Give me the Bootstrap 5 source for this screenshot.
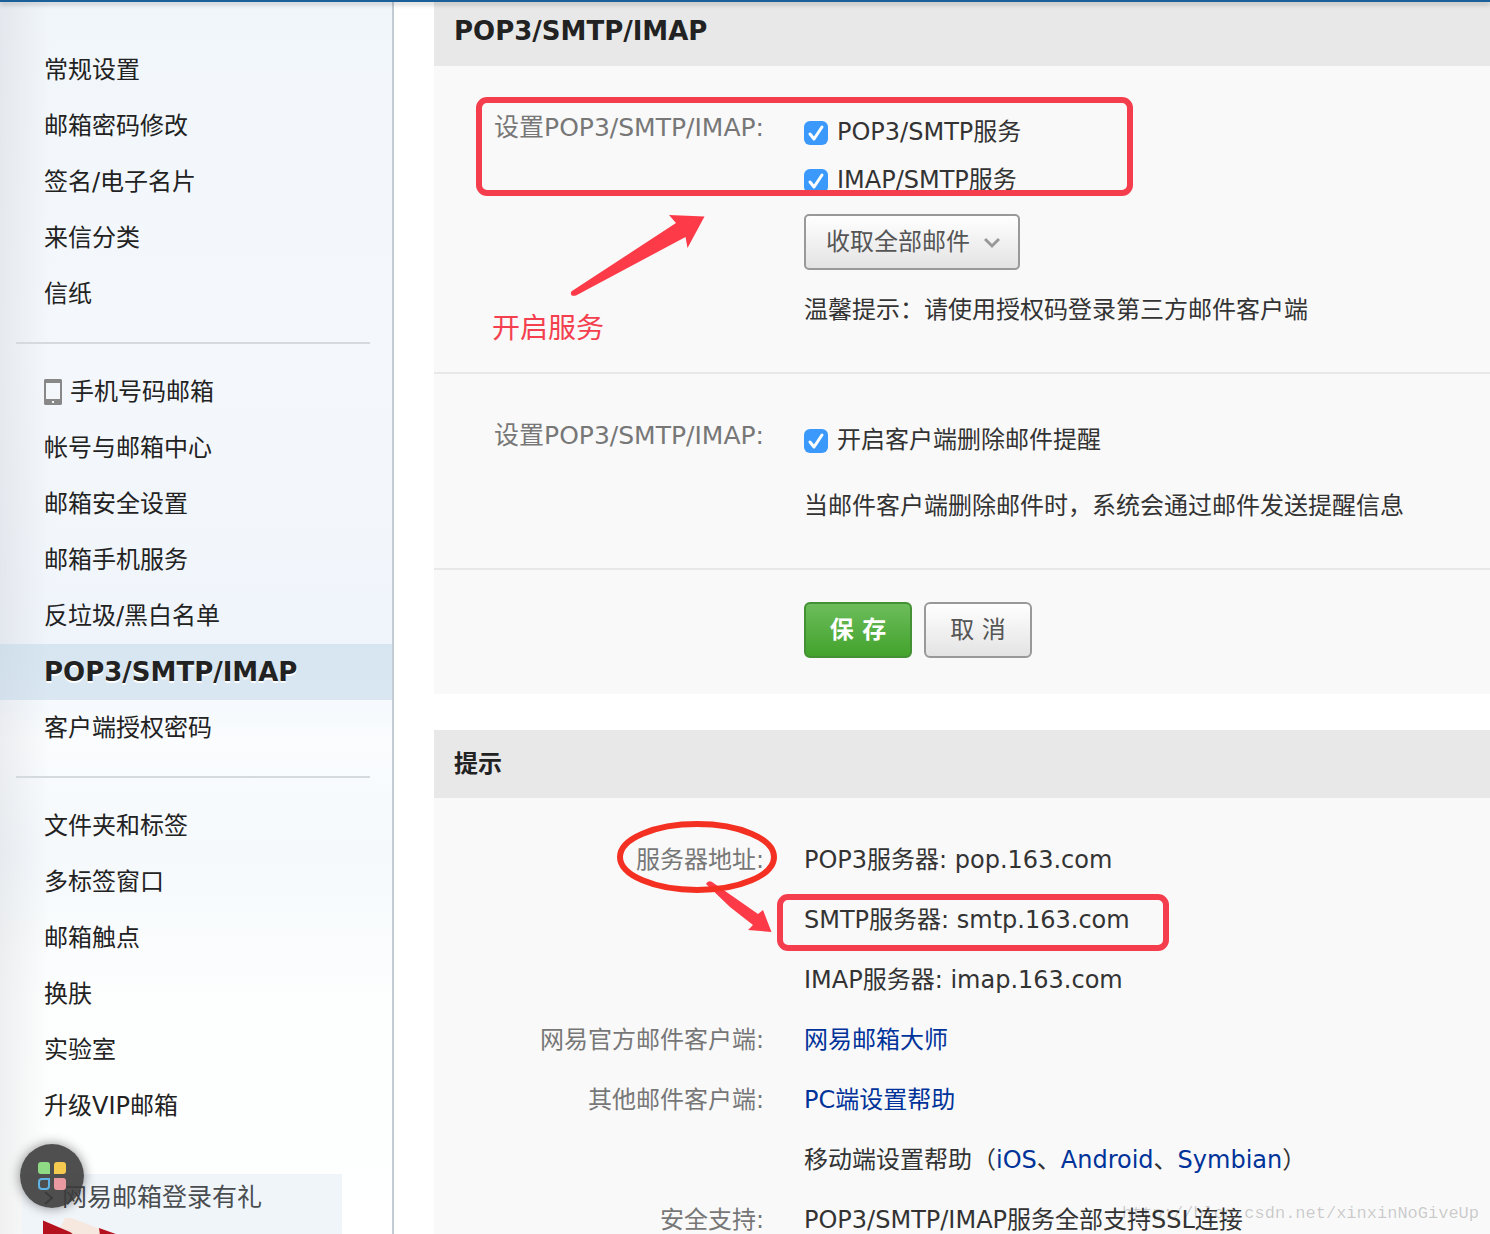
<!DOCTYPE html>
<html lang="zh-CN">
<head>
<meta charset="utf-8">
<meta name="viewport" content="width=device-width, initial-scale=1">
<title>POP3/SMTP/IMAP</title>
<link href="https://cdn.jsdelivr.net/npm/bootstrap@5.3.0/dist/css/bootstrap.min.css" rel="stylesheet">
<style>
body{font:24px/40px "DejaVu Sans","Noto Sans CJK SC",sans-serif;color:#333;background:#fff}
.topline{height:2px;background:#1a5f97;box-shadow:0 2px 5px rgba(0,0,0,.35);z-index:2}
.side{width:394px;border-right:2px solid #c3ccd4;padding-top:40px;
 background:linear-gradient(90deg,rgba(90,90,100,.09),rgba(90,90,100,0) 50px),linear-gradient(#f1f6fb,#f4f8fc 350px,#f0f5fb 640px,#fafcfe 740px,#f5f9fc 850px,#fdfefe 1000px,#fff)}
.side .nav-link{line-height:56px;padding:0 0 0 44px;color:#222}
.side .nav-link.active{font-size:26px;font-weight:700;background:rgba(190,214,232,.5);text-shadow:0 2px 0 #fff}
.side hr{margin:20px 22px 20px 16px;border:0;height:2px;background:#d5dade;opacity:1}
.promo{margin:40px 50px 0 22px;background:#f0f5fa;height:120px;padding:4px 0 0 21px}
.promo a{color:#4a4d50;font-size:25px}
.launcher{left:20px;bottom:26px;width:64px;height:64px;background:rgba(60,60,60,.9);box-shadow:0 0 12px rgba(0,0,0,.45);z-index:3}
.content{padding-left:40px}
.head{background:#e8e8e8;padding:0 20px;font-size:24px;font-weight:700;line-height:68px;color:#222}
.head-first{font-size:26px;line-height:58px;padding-bottom:6px}
.panel{background:#f9f9f9}
.panel+.panel{margin-top:36px}
.part{gap:40px;padding:42px 0}
.part+.part{border-top:2px solid #e8e8e8}
.part .tag{font-size:25px}
.part-actions{gap:12px;padding:32px 0 36px 370px}
.hint{margin-top:20px}
.part-remind .hint{margin-top:22px}
.tag{width:330px;text-align:right;color:#777}
.line{line-height:48px}
.line label{padding-left:9px}
.tick{width:24px;height:24px;margin:2px 0 0;border:0;border-radius:5px}
.tick:checked[type=checkbox]{background-color:#3b99fc;background-image:url("data:image/svg+xml,%3csvg xmlns='http://www.w3.org/2000/svg' viewBox='0 0 24 24'%3e%3cpath fill='none' stroke='%23fff' stroke-width='3' stroke-linecap='round' stroke-linejoin='round' d='M6 13l4 5 8-12'/%3e%3c/svg%3e")}
.pick{width:216px;height:56px;margin-top:10px}
.pick select{appearance:none;border:2px solid #999;border-radius:5px;color:#555;padding:0 20px;background:linear-gradient(#fff,#e3e3e3)}
.pick svg{right:20px;top:23px;pointer-events:none}
.act{width:108px;height:56px;border-radius:6px;padding:0;font-size:24px;border:2px solid #999;color:#555;background:linear-gradient(#fff,#e3e3e3)}
.act-save{border-color:#439134;color:#fff;font-weight:700;background:linear-gradient(#6cbd5b,#43a32c)}
.tips{padding-top:32px}
.tips dl{gap:0 40px}
.tips dt,.tips dd{line-height:60px;margin:0;font-weight:400}
.tips a{color:#003399;text-decoration:none}
.notes{left:0;top:0;pointer-events:none}
.callout-text{left:492px;top:309px;font-size:28px;color:#f4404e}
.stamp{right:11px;bottom:0;font:17px/40px "Liberation Mono",monospace;color:rgba(0,0,0,.2)}
</style>
<script src="https://cdn.jsdelivr.net/npm/bootstrap@5.3.0/dist/js/bootstrap.bundle.min.js"></script>
</head>
<body class="vh-100 overflow-hidden position-relative d-flex flex-column">
<div class="topline position-relative flex-shrink-0"></div>
<div class="d-flex flex-grow-1">
 <aside class="side flex-shrink-0">
  <nav class="nav flex-column">
   <a class="nav-link" href="#">常规设置</a>
   <a class="nav-link" href="#">邮箱密码修改</a>
   <a class="nav-link" href="#">签名/电子名片</a>
   <a class="nav-link" href="#">来信分类</a>
   <a class="nav-link" href="#">信纸</a>
  </nav>
  <hr>
  <nav class="nav flex-column">
   <a class="nav-link d-flex align-items-center gap-2" href="#"><svg width="18" height="26" viewBox="0 0 18 26"><path fill="#888" fill-rule="evenodd" d="M1 0h16l1 1v24l-1 1H1l-1-1V1zM2 4v16h14V4zM8 22v2h2v-2z"/></svg>手机号码邮箱</a>
   <a class="nav-link" href="#">帐号与邮箱中心</a>
   <a class="nav-link" href="#">邮箱安全设置</a>
   <a class="nav-link" href="#">邮箱手机服务</a>
   <a class="nav-link" href="#">反垃圾/黑白名单</a>
   <a class="nav-link active" href="#">POP3/SMTP/IMAP</a>
   <a class="nav-link" href="#">客户端授权密码</a>
  </nav>
  <hr>
  <nav class="nav flex-column">
   <a class="nav-link" href="#">文件夹和标签</a>
   <a class="nav-link" href="#">多标签窗口</a>
   <a class="nav-link" href="#">邮箱触点</a>
   <a class="nav-link" href="#">换肤</a>
   <a class="nav-link" href="#">实验室</a>
   <a class="nav-link" href="#">升级VIP邮箱</a>
  </nav>
  <div class="promo">
   <a class="d-flex align-items-center gap-2 text-decoration-none" href="#"><svg width="11" height="16" viewBox="0 0 11 16" fill="none" stroke="#333" stroke-width="2"><path d="M2 2l7 6-7 6"/></svg>网易邮箱登录有礼</a>
   <svg class="d-block" width="90" height="40" viewBox="0 0 90 40"><path fill="#f6e7df" d="M17 10L23 -2 60 12 70 40H40z"/><path fill="#b5121f" d="M-1 2l28 12 14 10v16H-1zM56 10l28 10v20H60z"/></svg>
  </div>
 </aside>
 <main class="content flex-grow-1">
  <section class="panel">
   <h1 class="head head-first mb-0">POP3/SMTP/IMAP</h1>
   <form>
    <div class="part d-flex">
     <div class="tag">设置POP3/SMTP/IMAP:</div>
     <div>
      <div class="line d-flex align-items-center"><input class="form-check-input tick" type="checkbox" id="pop" checked><label for="pop">POP3/SMTP服务</label></div>
      <div class="line d-flex align-items-center"><input class="form-check-input tick" type="checkbox" id="imap" checked><label for="imap">IMAP/SMTP服务</label></div>
      <div class="pick position-relative"><select class="w-100 h-100" aria-label="收取范围"><option>收取全部邮件</option></select><svg class="position-absolute" width="16" height="12" viewBox="0 0 16 12" fill="none" stroke="#999" stroke-width="3"><path d="M1 2l7 7 7-7"/></svg></div>
      <p class="mb-0 hint">温馨提示：请使用授权码登录第三方邮件客户端</p>
     </div>
    </div>
    <div class="part part-remind d-flex">
     <div class="tag">设置POP3/SMTP/IMAP:</div>
     <div>
      <div class="line d-flex align-items-center"><input class="form-check-input tick" type="checkbox" id="del" checked><label for="del">开启客户端删除邮件提醒</label></div>
      <p class="mb-0 hint">当邮件客户端删除邮件时，系统会通过邮件发送提醒信息</p>
     </div>
    </div>
    <div class="part part-actions d-flex">
     <button type="button" class="btn act act-save">保 存</button>
     <button type="button" class="btn act">取 消</button>
    </div>
   </form>
  </section>
  <section class="panel">
   <h2 class="head mb-0">提示</h2>
   <div class="tips">
    <dl class="d-flex mb-0"><dt class="tag">服务器地址:</dt><dd>POP3服务器: pop.163.com<br>SMTP服务器: smtp.163.com<br>IMAP服务器: imap.163.com</dd></dl>
    <dl class="d-flex mb-0"><dt class="tag">网易官方邮件客户端:</dt><dd><a href="#">网易邮箱大师</a></dd></dl>
    <dl class="d-flex mb-0"><dt class="tag">其他邮件客户端:</dt><dd><a href="#">PC端设置帮助</a><br>移动端设置帮助（<a href="#">iOS</a>、<a href="#">Android</a>、<a href="#">Symbian</a>）</dd></dl>
    <dl class="d-flex mb-0"><dt class="tag">安全支持:</dt><dd>POP3/SMTP/IMAP服务全部支持SSL连接</dd></dl>
   </div>
  </section>
 </main>
</div>
<svg class="notes position-absolute" width="1200" height="960" viewBox="0 0 1200 960" fill="none">
 <g stroke="#f43e4d" stroke-width="6"><rect x="479" y="100" width="651" height="93" rx="8"/><rect x="780" y="897" width="386" height="51" rx="8"/></g>
 <path fill="#fc3a48" d="M572 291L676 223 669 215 704.500 216.500 687.500 248 685.500 237 576 295.500Q570 297 571 292z"/>
 <path fill="#fc3a48" d="M706 884Q708 880 712 882L738 900 758 914 763 910 771.500 932 748 930 753 925 730 907z"/>
 <ellipse cx="697" cy="857" rx="77" ry="33" stroke="#f33022" stroke-width="6"/>
</svg>
<div class="callout-text position-absolute">开启服务</div>
<button type="button" class="launcher position-absolute border-0 rounded-circle p-0 d-flex align-items-center justify-content-center" aria-label="应用"><svg width="28" height="28" viewBox="0 0 28 28"><path fill="#8fda85" d="M3 0h6q3 0 3 3v9H3q-3 0-3-3V3q0-3 3-3z"/><path fill="#f6c94f" d="M19 0h6q3 0 3 3v6q0 3-3 3h-9V3q0-3 3-3z"/><path fill="none" stroke="#5fb3e4" stroke-width="2" d="M4 17h7v7q0 3-3 3H4q-3 0-3-3v-4q0-3 3-3z"/><path fill="#e99aa0" d="M16 16h9q3 0 3 3v6q0 3-3 3h-6q-3 0-3-3z"/></svg></button>
<div class="stamp position-absolute">http://blog.csdn.net/xinxinNoGiveUp</div>
</body>
</html>
